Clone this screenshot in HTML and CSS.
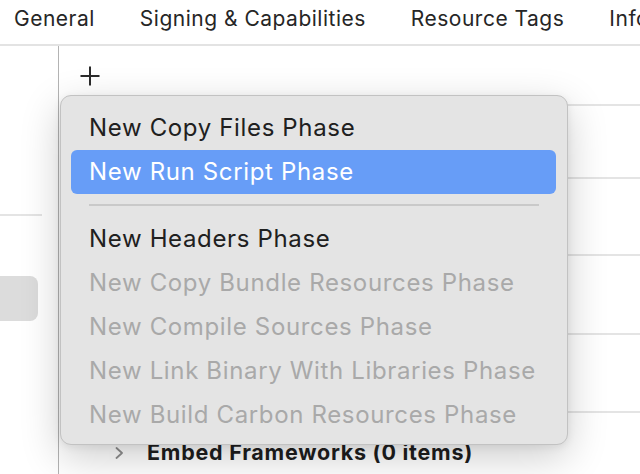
FILE: index.html
```html
<!DOCTYPE html>
<html>
<head>
<meta charset="utf-8">
<link rel="stylesheet" href="styles.css">
</head>
<body>
<div class="tabs">
  <span class="tab">General</span>
  <span class="tab">Signing &amp; Capabilities</span>
  <span class="tab">Resource Tags</span>
  <span class="tab">Info</span>
</div>
<div class="main">
  <aside class="sidebar">
    <div class="side-gap"></div>
    <div class="side-line"></div>
    <div class="side-gap2"></div>
    <div class="side-sel"></div>
  </aside>
  <section class="content">
    <div class="toolbar">
      <svg class="plus" width="20" height="20" viewBox="0 0 20 20"><path d="M10 0.5V19.5M0.5 10H19.5" stroke="#2b2b2b" stroke-width="2" fill="none"/></svg>
    </div>
    <div class="row r1"></div>
    <div class="row r2"></div>
    <div class="row r3"></div>
    <div class="row r4"></div>
    <div class="row last">
      <span class="chev">
        <svg width="9" height="12" viewBox="0 0 9 12"><path d="M1.5 1L7 6L1.5 11" stroke="#8e8e8e" stroke-width="1.8" fill="none" stroke-linecap="round" stroke-linejoin="round"/></svg>
      </span>
      <span class="phase-title">Embed Frameworks (0 items)</span>
    </div>
  </section>
</div>
<div class="menu">
  <div class="item">New Copy Files Phase</div>
  <div class="item active">New Run Script Phase</div>
  <div class="sep"></div>
  <div class="item">New Headers Phase</div>
  <div class="item disabled">New Copy Bundle Resources Phase</div>
  <div class="item disabled">New Compile Sources Phase</div>
  <div class="item disabled">New Link Binary With Libraries Phase</div>
  <div class="item disabled">New Build Carbon Resources Phase</div>
</div>
</body>
</html>
```

FILE: styles.css
```css
html, body {
  margin: 0;
  padding: 0;
  background: #ffffff;
  width: 640px;
  height: 474px;
  overflow: hidden;
  font-family: Inter, "Noto Sans", "Liberation Sans", sans-serif;
}

.tabs {
  height: 46px;
  box-sizing: border-box;
  border-bottom: 2px solid #e3e3e3;
  display: flex;
  align-items: center;
  gap: 45px;
  padding-left: 14px;
  padding-bottom: 7px;
  font-size: 21px;
  letter-spacing: 0.5px;
  color: #262626;
  white-space: nowrap;
}

.main {
  display: flex;
  height: 428px;
}

.sidebar {
  width: 59px;
  border-right: 1.5px solid #b3b3b3;
  box-sizing: border-box;
  display: flex;
  flex-direction: column;
  flex-shrink: 0;
}
.side-gap { height: 168px; flex-shrink: 0; }
.side-line { height: 2px; width: 42px; background: #e4e4e4; flex-shrink: 0; }
.side-gap2 { height: 60px; flex-shrink: 0; }
.side-sel {
  width: 38px;
  height: 45px;
  background: #dcdcdc;
  border-radius: 0 8px 8px 0;
  flex-shrink: 0;
}

.content {
  flex: 1;
  display: flex;
  flex-direction: column;
  overflow: hidden;
}
.toolbar {
  height: 58px;
  padding-left: 21px;
  padding-top: 20px;
  box-sizing: border-box;
  flex-shrink: 0;
}
.plus { display: block; }

.row {
  border-top: 2px solid #e4e4e4;
  margin-left: 40px;
  flex-shrink: 0;
  box-sizing: border-box;
}
.row.r1 { height: 73px; }
.row.r2 { height: 77px; }
.row.r3 { height: 79px; }
.row.r4 { height: 78px; }
.row.last {
  height: 78px;
  display: flex;
  align-items: flex-start;
  padding-top: 26px;
  padding-left: 16px;
  gap: 23px;
}
.chev { display: block; padding-top: 8px; }
.chev svg { display: block; }
.phase-title {
  font-weight: 700;
  font-size: 21.5px;
  letter-spacing: 0.75px;
  color: #1e1e1e;
  white-space: nowrap;
}

.menu {
  position: absolute;
  left: 60px;
  top: 95px;
  width: 508px;
  height: 350px;
  box-sizing: border-box;
  background: #e4e4e4;
  border: 1px solid #c2c2c2;
  border-radius: 11px;
  box-shadow: 0 12px 40px rgba(0, 0, 0, 0.2), 0 2px 8px rgba(0, 0, 0, 0.07);
  padding: 10px 10px 0 10px;
  display: flex;
  flex-direction: column;
}

.item {
  height: 44px;
  line-height: 44px;
  padding-left: 18px;
  font-size: 24px;
  letter-spacing: 0.65px;
  color: #202020;
  border-radius: 6px;
  white-space: nowrap;
  flex-shrink: 0;
}
.item.active {
  background: #679df7;
  color: #ffffff;
  margin-right: 1px;
}
.item.disabled { color: #a9a9a9; }

.sep {
  height: 2px;
  background: #c9c9c9;
  margin: 10px 18px 11px 18px;
  flex-shrink: 0;
}
```
